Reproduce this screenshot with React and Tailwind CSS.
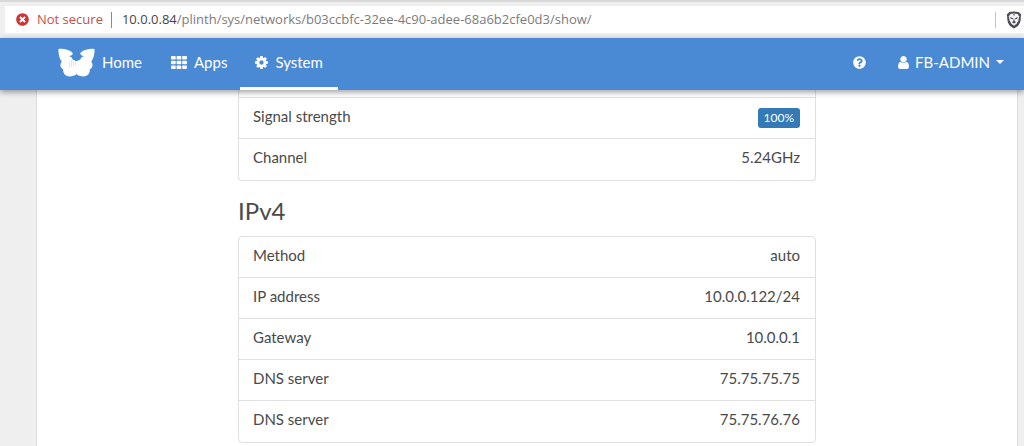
import React from "react";
import { FaQuestionCircle, FaTimesCircle } from "react-icons/fa";

const wifiRows = [
  { label: "Signal strength", value: "100%", badge: true },
  { label: "Channel", value: "5.24GHz" },
];

const ipv4Rows = [
  { label: "Method", value: "auto" },
  { label: "IP address", value: "10.0.0.122/24" },
  { label: "Gateway", value: "10.0.0.1" },
  { label: "DNS server", value: "75.75.75.75" },
  { label: "DNS server", value: "75.75.76.76" },
];

const ButterflyLogo = () => (
  <svg viewBox="0 0 37 29" className="h-[29px] w-[37px] shrink-0" fill="currentColor" aria-hidden="true">
    <path d="M0.5 1C5 0.4 11 1.4 14.2 4.6C15.2 5.8 14.6 6.8 13.6 7.2L11.2 8.2C13.2 8.6 14.2 9.6 14.6 11.4L18.5 13.2L22.4 11.4C22.8 9.6 23.8 8.6 25.8 8.2L23.4 7.2C22.4 6.8 21.8 5.8 22.8 4.6C26 1.4 32 0.4 36.5 1C36.8 6 35.4 11 33.2 13.4C35.6 16.4 34.6 20 31.8 21.2C32.2 25.4 29.4 28.4 25.4 28.4C22.4 28.4 20.4 27.8 18.5 26C16.6 27.8 14.6 28.4 11.6 28.4C7.6 28.4 4.8 25.4 5.2 21.2C2.4 20 1.4 16.4 3.8 13.4C1.6 11 0.2 6 0.5 1Z" />
    <path d="M11.5 13V20M13.5 12V19M15.5 13V18M17.5 14V17" stroke="#4a89d3" strokeWidth="0.6" strokeOpacity="0.35" fill="none" />
  </svg>
);

const GridIcon = () => (
  <svg viewBox="0 0 16 13" className="h-[13px] w-4 shrink-0" fill="currentColor" aria-hidden="true">
    {[0, 4.7, 9.4].map((y) =>
      [0, 5.6, 11.2].map((x) => (
        <rect key={`${x}-${y}`} x={x} y={y} width="4.7" height="3.6" rx="0.7" />
      ))
    )}
  </svg>
);

const CogIcon = () => (
  <svg viewBox="128 128 1536 1536" className="size-[13px] shrink-0" fill="currentColor" aria-hidden="true">
    <path d="M1152 896q0-106-75-181t-181-75-181 75-75 181 75 181 181 75 181-75 75-181zm512-109v222q0 12-8 23t-20 13l-185 28q-19 54-39 91 35 50 107 138 10 12 10 25t-9 23q-27 37-99 108t-94 71q-12 0-26-9l-138-108q-44 23-91 38-16 136-29 186-7 28-36 28h-222q-14 0-24.5-8.5t-11.5-21.5l-28-184q-49-16-90-37l-141 107q-10 9-25 9-14 0-25-11-126-114-165-168-7-10-7-23 0-12 8-23 15-21 51-66.5t54-70.5q-27-50-41-99l-183-27q-13-2-21-12.5t-8-23.5v-222q0-12 8-23t19-13l186-28q14-46 39-92-40-57-107-138-10-12-10-24 0-10 9-23 26-36 98.5-107.5t94.5-71.5q13 0 26 10l138 107q44-23 91-38 16-136 29-186 7-28 36-28h222q14 0 24.5 8.5t11.5 21.5l28 184q49 16 90 37l142-107q9-9 24-9 13 0 25 10 129 119 165 170 7 8 7 22 0 12-8 23-15 21-51 66.5t-54 70.5q26 50 41 98l183 28q13 2 21 12.5t8 23.5z" />
  </svg>
);

const UserIcon = () => (
  <svg viewBox="256 128 1280 1536" className="h-[13px] w-[11px] shrink-0" fill="currentColor" aria-hidden="true">
    <path d="M1536 1399q0 109-62.5 187t-150.5 78h-854q-88 0-150.5-78t-62.5-187q0-85 8.5-160.5t31.5-152 58.5-131 94-89 134.5-34.5q131 128 313 128t313-128q76 0 134.5 34.5t94 89 58.5 131 31.5 152 8.5 160.5zm-256-887q0 159-112.5 271.5t-271.5 112.5-271.5-112.5-112.5-271.5 112.5-271.5 271.5-112.5 271.5 112.5 112.5 271.5z" />
  </svg>
);

const BraveIcon = () => (
  <svg viewBox="0 0 16 18" className="h-[18px] w-4" aria-hidden="true">
    <path d="M3.4 1L8 0.4L12.6 1L15.2 3.6L14.8 6C15 10 13.6 13.6 11.6 15.2L8 17.6L4.4 15.2C2.4 13.6 1 10 1.2 6L0.8 3.6Z" fill="#4b4b55" />
    <path d="M4.4 3L8 2.4L11.6 3L13.2 5.4L12.4 9.4L10.6 12.8L8 14.8L5.4 12.8L3.6 9.4L2.8 5.4Z" fill="#f4f4f5" />
    <path d="M4.2 6L7 7.2L6.4 8.4L4.6 7.6ZM11.8 6L9 7.2L9.6 8.4L11.4 7.6ZM8 6.6L8.6 10L10 11.2L8 12.6L6 11.2L7.4 10ZM7 3.2H9L8 5Z" fill="#4b4b55" />
  </svg>
);

const AddressBar = () => (
  <div className="border-t-2 border-[#d8d8d8] bg-[#efefef] pt-1 pb-[5px] pl-[5px]">
    <div className="flex h-[27px] items-center bg-white pr-[2px] pl-[11px] font-['Open_Sans',sans-serif] text-[13px]">
      <FaTimesCircle className="size-[13px] shrink-0 text-[#d03434]" />
      <span className="ml-2 shrink-0 text-[#c4504a]">Not secure</span>
      <span className="mx-2 h-4 w-px shrink-0 bg-[#8a8a8a]" />
      <label htmlFor="path" className="ml-[2px] shrink-0 text-[#444]">
        10.0.0.84
      </label>
      <input
        id="path"
        type="text"
        className="min-w-0 flex-1 text-[#7b7b7b] outline-none"
        defaultValue="/plinth/sys/networks/b03ccbfc-32ee-4c90-adee-68a6b2cfe0d3/show/"
      />
      <span className="mr-[10px] h-4 w-px shrink-0 bg-[#c4c4c4]" />
      <button type="button" aria-label="Brave Shields" className="shrink-0">
        <BraveIcon />
      </button>
    </div>
  </div>
);

const Navbar = () => (
  <nav className="relative flex h-[52px] items-stretch bg-[#4a89d3] pr-5 pl-[58px] text-[15px] text-white shadow-[0_2px_6px_rgba(0,0,0,0.4)]">
    <a href="#home" className="flex items-center gap-[7px] pb-1">
      <ButterflyLogo />
      Home
    </a>
    <a href="#apps" className="ml-4 flex items-center gap-[7px] px-[13px] pb-1">
      <GridIcon />
      Apps
    </a>
    <a
      href="#system"
      className="flex items-center gap-[7px] border-b-3 border-white px-[15px]"
    >
      <CogIcon />
      System
    </a>
    <a href="#help" aria-label="Help" className="ml-auto flex items-center pb-1">
      <FaQuestionCircle className="size-[13px]" />
    </a>
    <button type="button" className="ml-8 flex items-center gap-[6px] pb-1">
      <UserIcon />
      FB-ADMIN
      <span className="border-x-4 border-t-4 border-x-transparent border-t-white" />
    </button>
  </nav>
);

const InfoTable = ({ label, rows, continued }) => (
  <div
    className={
      continued
        ? "rounded-b border border-t-0 border-[#e0e0e0] pt-[7px]"
        : "rounded border border-[#e0e0e0]"
    }
  >
    <table aria-label={label} className="w-full">
      <tbody>
        {rows.map((row, index) => (
          <tr
            key={index}
            className={continued || index > 0 ? "border-t border-[#e0e0e0]" : ""}
          >
            <th scope="row" className="h-[41px] px-[14px] pb-1 text-left font-normal">
              {row.label}
            </th>
            <td className="px-[15px] pb-1 text-right">
              {row.badge ? (
                <span className="inline-block rounded-[3px] bg-[#337ab7] px-[6px] text-xs leading-5 text-white">
                  {row.value}
                </span>
              ) : (
                row.value
              )}
            </td>
          </tr>
        ))}
      </tbody>
    </table>
  </div>
);

export default function App() {
  return (
    <div className="flex min-h-screen flex-col bg-[#efefef] font-[Lato,sans-serif] text-[15px] text-[#4a4a4a]">
      <AddressBar />
      <Navbar />
      <main className="mr-[6px] ml-9 flex-1 border-x border-[#ddd] bg-white">
        <div className="mx-auto max-w-[578px]">
          <InfoTable label="Wi-Fi" rows={wifiRows} continued />
          <h3 className="mt-[14px] mb-[9px] text-2xl">IPv4</h3>
          <InfoTable label="IPv4" rows={ipv4Rows} />
        </div>
      </main>
    </div>
  );
}
